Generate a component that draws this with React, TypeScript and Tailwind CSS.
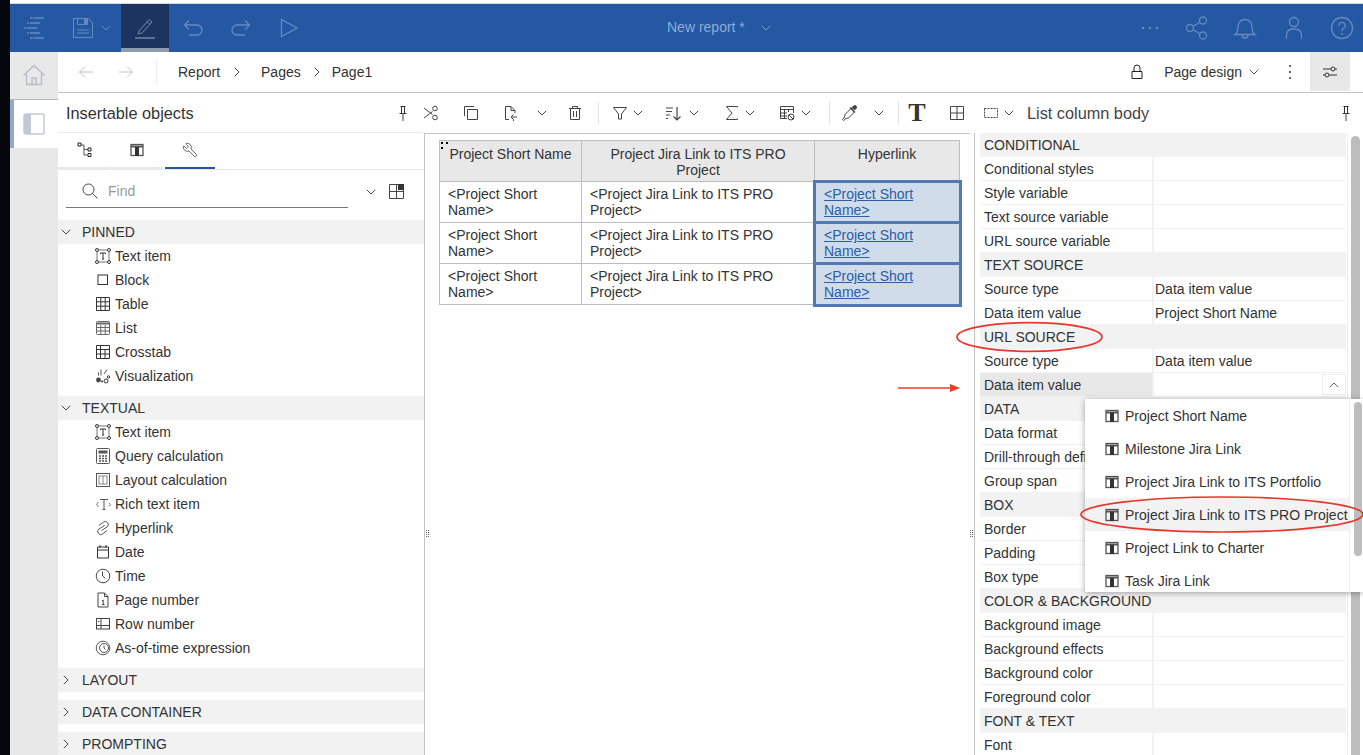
import type { ReactNode } from "react";
import { Wrench } from "lucide-react";

const font = "font-['Liberation_Sans',Arial,sans-serif]";

function Svg({ s = 16, className = "", children }: { s?: number; className?: string; children: ReactNode }) {
  return (
    <svg
      width={s}
      height={s}
      viewBox={`0 0 ${s} ${s}`}
      fill="none"
      stroke="currentColor"
      strokeWidth="1"
      className={`shrink-0 ${className}`}
    >
      {children}
    </svg>
  );
}

function Chev({ className = "text-[#777]" }: { className?: string }) {
  return (
    <svg width="10" height="6" viewBox="0 0 10 6" fill="none" stroke="currentColor" className={`shrink-0 ${className}`}>
      <path d="M.8.8 5 5l4.2-4.2" />
    </svg>
  );
}

const Pin = () => (
  <Svg>
    <path d="M5.500 1.500h5M6.500 1.500v7M9.500 1.500v7M4.500 8.500h7" />
    <path d="M8 8.500V16" strokeWidth="1.400" stroke="#777" />
  </Svg>
);

const ColumnIcon = () => (
  <Svg s={14}>
    <rect x="1" y="1.500" width="12" height="11" stroke="#555" strokeWidth="1.300" />
    <path d="M1 3.500h12" stroke="#555" strokeWidth="2" />
    <rect x="5" y="4" width="4" height="9" fill="#333" stroke="none" />
  </Svg>
);

const itemIcons: Record<string, ReactNode> = {
  text: (
    <Svg>
      <rect x="2" y="2" width="12" height="12" stroke="#777" />
      <rect x=".5" y=".5" width="3" height="3" rx="1.500" fill="#fff" />
      <rect x="12.500" y=".5" width="3" height="3" rx="1.500" fill="#fff" />
      <rect x=".5" y="12.500" width="3" height="3" rx="1.500" fill="#fff" />
      <rect x="12.500" y="12.500" width="3" height="3" rx="1.500" fill="#fff" />
      <path d="M5.500 6V5h5v1M8 5v6M7 11h2" />
    </Svg>
  ),
  block: (
    <Svg>
      <rect x="3" y="3" width="9.500" height="9.500" />
    </Svg>
  ),
  table: (
    <Svg>
      <path d="M1.500 1.500h13v13h-13zM5.800 1.500v13M10.200 1.500v13M1.500 5.800h13M1.500 10.200h13" stroke="#333" />
    </Svg>
  ),
  list: (
    <Svg>
      <rect x="1.500" y="1.500" width="13" height="13" rx="1" stroke="#666" />
      <path d="M1.500 3.500h13" stroke="#666" strokeWidth="2" />
      <path d="M1.500 7.500h13M1.500 11h13M5.800 5v9.500M10.200 5v9.500" stroke="#666" />
    </Svg>
  ),
  crosstab: (
    <Svg>
      <path d="M1.500 1.500h13v13h-13zM5.500 1.500v13M10 5.500v9M1.500 5.500h13M1.500 10h13" stroke="#333" />
    </Svg>
  ),
  viz: (
    <Svg>
      <path d="M3.500 4.500v3M6 1.500v6M12 1.500 9 6" stroke="#555" />
      <circle cx="3.500" cy="12" r="2.400" fill="#444" stroke="none" />
      <circle cx="11" cy="13" r="2" />
      <circle cx="13.500" cy="9" r="1.200" />
      <circle cx="7" cy="13.500" r="1" fill="#444" stroke="none" />
    </Svg>
  ),
  query: (
    <Svg>
      <rect x="1.500" y=".5" width="13" height="15" rx="1" stroke="#555" />
      <rect x="3.500" y="2.500" width="9" height="3" fill="#555" stroke="none" />
      <path d="M4 8h2M7 8h2M10 8h2M4 10.500h2M7 10.500h2M10 10.500h2M4 13h2M7 13h2M10 13h2" stroke="#555" strokeWidth="1.400" />
    </Svg>
  ),
  layoutCalc: (
    <Svg>
      <rect x="1.500" y="1.500" width="13" height="13" stroke="#555" />
      <rect x="4" y="4" width="8" height="8" stroke="#888" />
      <path d="M8 4v8" stroke="#888" />
    </Svg>
  ),
  rich: (
    <Svg>
      <path d="M5 3.500h8M9 3.500v10M7.500 13.500h3" stroke="#555" />
      <path d="M3.500 6 1.500 8.500l2 2.500M14 7l1.500 1.500-1.500 2" stroke="#777" />
    </Svg>
  ),
  link: (
    <Svg>
      <path d="M9.500 5.500 4 9a3 3 0 0 0 3.500 5L12 10.500" stroke="#555" />
      <path d="M6.500 10.500 12 7a3 3 0 0 0-3.500-5L4 5.500" stroke="#555" />
    </Svg>
  ),
  date: (
    <Svg>
      <path d="M2.500 3h11v11h-11zM2.500 6h11M5 1v3M11 1v3" stroke="#333" />
    </Svg>
  ),
  time: (
    <Svg>
      <circle cx="8" cy="8" r="6.800" stroke="#444" />
      <path d="M7.500 3.500V8l3 2.500" stroke="#444" />
    </Svg>
  ),
  page: (
    <Svg>
      <path d="M3 1h6.500L13 4.500V15H3zM9.500 1v3.500H13" stroke="#444" />
      <path d="M7 9l1.200-1v4.500M7 12.500h2.500" stroke="#444" />
    </Svg>
  ),
  row: (
    <Svg>
      <rect x="1.500" y="2.500" width="13" height="10.500" stroke="#444" />
      <path d="M1.500 9.500h13M6 2.500v10.500" stroke="#444" />
      <path d="M3 5.500h1.500" stroke="#444" />
    </Svg>
  ),
  asof: (
    <Svg>
      <circle cx="8" cy="8" r="6.800" stroke="#555" />
      <circle cx="9" cy="8" r="4.500" stroke="#555" />
      <path d="M9 5.500V8l1.500 1.500" stroke="#555" />
    </Svg>
  ),
};

function Item({ icon, label }: { icon: string; label: string }) {
  return (
    <div className="flex h-[24px] items-center pl-[37px]">
      <span className="flex w-[20px] justify-start">{itemIcons[icon]}</span>
      <span>{label}</span>
    </div>
  );
}

function Section({ label, open = false }: { label: string; open?: boolean }) {
  return (
    <div className="flex h-[24px] items-center bg-[#f2f2f2] pl-[3px]">
      <span className="flex w-[21px] justify-start">
        {open ? (
          <Chev className="text-[#444]" />
        ) : (
          <svg width="6" height="10" viewBox="0 0 6 10" fill="none" stroke="#444" className="ml-[2px]">
            <path d="M.8.800 5 5 .8 9.200" />
          </svg>
        )}
      </span>
      <span>{label}</span>
    </div>
  );
}

const propRows: { h?: string; l?: string; v?: string; hl?: boolean }[] = [
  { h: "CONDITIONAL" },
  { l: "Conditional styles" },
  { l: "Style variable" },
  { l: "Text source variable" },
  { l: "URL source variable" },
  { h: "TEXT SOURCE" },
  { l: "Source type", v: "Data item value" },
  { l: "Data item value", v: "Project Short Name" },
  { h: "URL SOURCE" },
  { l: "Source type", v: "Data item value" },
  { l: "Data item value", hl: true },
  { h: "DATA" },
  { l: "Data format" },
  { l: "Drill-through definitions" },
  { l: "Group span" },
  { h: "BOX" },
  { l: "Border" },
  { l: "Padding" },
  { l: "Box type" },
  { h: "COLOR & BACKGROUND" },
  { l: "Background image" },
  { l: "Background effects" },
  { l: "Background color" },
  { l: "Foreground color" },
  { h: "FONT & TEXT" },
  { l: "Font" },
];

const menuItems = [
  "Project Short Name",
  "Milestone Jira Link",
  "Project Jira Link to ITS Portfolio",
  "Project Jira Link to ITS PRO Project",
  "Project Link to Charter",
  "Task Jira Link",
];

function BodyRow() {
  return (
    <>
      <div className="h-[41px] border-r border-b border-[#bdbdbd] pt-[4px] pl-[8px]">&lt;Project Short Name&gt;</div>
      <div className="h-[41px] border-r border-b border-[#bdbdbd] pt-[4px] pl-[8px]">&lt;Project Jira Link to ITS PRO Project&gt;</div>
      <div className="relative z-10 h-[41px] bg-[#d1dcea] pt-[4px] pl-[9px] text-[#2a5ea8] underline outline-[3px] -outline-offset-1 outline-[#5279b5]">
        &lt;Project Short Name&gt;
      </div>
    </>
  );
}

export default function App() {
  return (
    <div className={`relative flex h-[755px] w-[1363px] overflow-hidden bg-white text-[14px] leading-[16px] text-[#333] ${font}`}>
      <div className="w-[10px] shrink-0 bg-[#05070c]" />
      <div className="flex min-w-0 flex-1 flex-col">
        <div className="h-[4px] shrink-0 border-b border-[#d5d8dd] bg-white" />

        {/* top bar */}
        <header className="flex h-[48px] shrink-0 items-center bg-[#2558a3] text-[#6689c0]">
          <div className="flex h-full w-[48px] items-center justify-center">
            <Svg s={24}>
              <g strokeWidth="1.500">
                <path d="M8 2h3M12 2h10M5 7h2M8 7h10M2 12h2M5 12h10M5 17h2M8 17h10M8 22h3M12 22h10" />
              </g>
            </Svg>
          </div>
          <div className="flex h-full w-[63px] items-center pl-[14px]">
            <Svg s={22}>
              <path d="M1.500 1.500h15l4 4v15h-19z" />
              <path d="M5.500 1.500v6h10v-6" />
              <rect x="12" y="2" width="3" height="5" fill="currentColor" stroke="none" />
              <path d="M5 13h12M5 16h12" />
            </Svg>
            <Chev className="ml-[7px] text-[#6689c0]" />
          </div>
          <div className="flex h-full w-[48px] flex-col items-center border-b-4 border-[#8f9aad] bg-[#1d3461] pt-[11px] text-[#6e86ad]">
            <Svg s={24}>
              <path d="M6 16 16 4.500l3 2.500L9 18l-4 1zM14 7l3 2.500" />
              <path d="M2 23h20" strokeWidth="1.500" />
            </Svg>
          </div>
          <div className="flex w-[48px] justify-center">
            <Svg s={22}>
              <path d="M2.500 8H15a5 5 0 0 1 0 10H7M7 3.500 2.500 8 7 12.500" strokeWidth="1.300" />
            </Svg>
          </div>
          <div className="flex w-[48px] justify-center">
            <Svg s={22}>
              <path d="M19.500 8H7a5 5 0 0 0 0 10h8M15 3.500 19.500 8 15 12.500" strokeWidth="1.300" />
            </Svg>
          </div>
          <div className="flex w-[50px] justify-center">
            <Svg s={20}>
              <path d="M1.500 1.500 17 10 1.500 18.500z" strokeWidth="1.300" />
            </Svg>
          </div>
          <span className="mb-[2px] ml-[352px] text-[#8fabd6]">New report *</span>
          <Chev className="ml-[16px] text-[#7f9dcc]" />
          <div className="ml-auto flex items-center pr-[9px]">
            <Svg s={24}>
              <circle cx="5" cy="12" r="1.200" fill="currentColor" stroke="none" />
              <circle cx="12" cy="12" r="1.200" fill="currentColor" stroke="none" />
              <circle cx="19" cy="12" r="1.200" fill="currentColor" stroke="none" />
            </Svg>
            <Svg s={24} className="ml-[23px]">
              <g strokeWidth="1.300">
                <circle cx="5" cy="12" r="3.500" />
                <circle cx="18" cy="4.500" r="3.500" />
                <circle cx="18" cy="19.500" r="3.500" />
                <path d="M8 10.300 15 6.300M8 13.700l7 4" />
              </g>
            </Svg>
            <Svg s={24} className="ml-[24px]">
              <g strokeWidth="1.300">
                <path d="M2 18.500c3-2 3-5 3-8a7 7 0 0 1 14 0c0 3 0 6 3 8zM9 19a3 3 0 0 0 6 0" />
              </g>
            </Svg>
            <Svg s={24} className="ml-[25px]">
              <g strokeWidth="1.300">
                <circle cx="12" cy="6" r="4.500" />
                <path d="M4.500 23v-4a6 6 0 0 1 6-6h3a6 6 0 0 1 6 6v4" />
              </g>
            </Svg>
            <Svg s={24} className="ml-[24px]">
              <g strokeWidth="1.300">
                <circle cx="12" cy="12" r="10.500" />
                <path d="M8.800 9.500a3.200 3.200 0 1 1 5 2.700c-1.200.8-1.800 1.300-1.800 3" />
              </g>
              <circle cx="12" cy="18" r="1" fill="currentColor" stroke="none" />
            </Svg>
          </div>
        </header>

        <div className="flex min-h-0 flex-1">
          {/* rail */}
          <nav className="w-[48px] shrink-0 bg-[#e8e8e8]">
            <div className="flex h-[48px] items-start justify-center border-b border-[#b5b9c2] pt-[11px] text-[#b6bcc8]">
              <Svg s={24}>
                <g strokeWidth="1.400">
                  <path d="M1.500 12.500 12 2.500l10.500 10M4.500 10.500V21a.5.500 0 0 0 .5.500h14a.5.500 0 0 0 .5-.500V10.500" />
                  <path d="M10 21.500V15h4v6.500" />
                </g>
              </Svg>
            </div>
            <div className="flex h-[48px] items-center justify-center border-l-4 border-[#8fa9d3] bg-white pr-[4px] text-[#c3c9d4]">
              <Svg s={22}>
                <rect x="1" y="1" width="20" height="20" rx="2" fill="#fff" stroke="currentColor" strokeWidth="1.500" />
                <rect x="1" y="1" width="7" height="20" fill="currentColor" stroke="none" />
              </Svg>
            </div>
          </nav>

          <div className="flex min-w-0 flex-1 flex-col">
            {/* breadcrumb row */}
            <div className="flex h-[41px] shrink-0 items-center border-b border-[#c4c4c4] pb-[1px]">
              <div className="flex w-[99px] items-center justify-between border-r border-[#ececec] py-[5px] pl-[20px] pr-[22px] text-[#c0c0c0]">
                <Svg>
                  <path d="M15 8H1.500M7 2.500 1.500 8 7 13.500" />
                </Svg>
                <Svg>
                  <path d="M1 8h13.500M9 2.500 14.500 8 9 13.500" />
                </Svg>
              </div>
              <span className="ml-[21px]">Report</span>
              <svg width="6" height="10" viewBox="0 0 6 10" fill="none" stroke="#444" className="ml-[14px]">
                <path d="M.8.800 5 5 .8 9.200" />
              </svg>
              <span className="ml-[21px]">Pages</span>
              <svg width="6" height="10" viewBox="0 0 6 10" fill="none" stroke="#444" className="ml-[13px]">
                <path d="M.8.800 5 5 .8 9.200" />
              </svg>
              <span className="ml-[12px]">Page1</span>
              <div className="ml-auto flex h-full items-center">
                <Svg>
                  <path d="M3 7.500h10v7H3zM5 7.500V4a3 3 0 0 1 6 0v3.500" stroke="#222" />
                </Svg>
                <span className="ml-[19px]">Page design</span>
                <Chev className="ml-[7px] text-[#555]" />
                <div className="ml-[30px] flex w-[2px] flex-col gap-[4px]">
                  <i className="h-[2px] w-[2px] rounded-full bg-[#333]" />
                  <i className="h-[2px] w-[2px] rounded-full bg-[#333]" />
                  <i className="h-[2px] w-[2px] rounded-full bg-[#333]" />
                </div>
                <div className="ml-[19px] mr-[13px] flex h-full w-[40px] items-center justify-center bg-[#e8e8e8]">
                  <Svg>
                    <path d="M1 5h8M13 5h2M1 11h2M7 11h8" stroke="#333" />
                    <circle cx="11" cy="5" r="2" stroke="#333" />
                    <circle cx="5" cy="11" r="2" stroke="#333" />
                  </Svg>
                </div>
              </div>
            </div>

            {/* title row with toolbar */}
            <div className="flex h-[40px] shrink-0 items-center">
              <div className="flex h-full w-[365px] items-center justify-between border-b border-[#e8e8e8] pl-[8px] pr-[12px]">
                <span className="text-[16.300px]">Insertable objects</span>
                <Pin />
              </div>
              <div className="flex h-full items-center text-[#444]">
                <Svg>
                  <path d="M1 3 9.500 9.500M1 13 9.500 6.500M9.500 9.500" />
                  <circle cx="12" cy="3.500" r="2.300" />
                  <circle cx="12" cy="12.500" r="2.300" />
                </Svg>
                <Svg className="ml-[24px]">
                  <path d="M1.500 11V1.500H11M4.500 4.500h10v10h-10z" />
                </Svg>
                <Svg className="ml-[24px]">
                  <path d="M6 14.500H2.500v-13H8l4 4V8M8 1.500v4h4M14 12H8M10.500 9.500 8 12l2.500 2.500V16" />
                </Svg>
                <Chev className="ml-[18px]" />
                <Svg className="ml-[20px]">
                  <path d="M2 3.500h12M5.500 3.500V1.500h5v2M3.500 3.500v11h9v-11M6.500 6v6M9.500 6v6" />
                </Svg>
                <i className="ml-[15px] h-[22px] w-px bg-[#e4e4e4]" />
                <Svg className="ml-[13px]">
                  <path d="M1.500 2.500h13L9.500 9v5h-3V9z" />
                </Svg>
                <Chev className="ml-[5px]" />
                <Svg className="ml-[22px]">
                  <path d="M1 3h7M1 6.500h6M1 10h4M1 13.500h2" />
                  <path d="M12 2v13M8.500 11.500 12 15l3.500-3.500" strokeWidth="1.200" />
                </Svg>
                <Chev className="ml-[8px]" />
                <Svg className="ml-[25px]">
                  <path d="M13.500 2.500v-1h-11L8 8l-5.500 6.500h11v-1" />
                </Svg>
                <Chev className="ml-[5px]" />
                <Svg className="ml-[24px]">
                  <path d="M1.500 1.500h13V8M1.500 1.500v12H8M1.500 4.500h13M1.500 8H8M1.500 11H8M5.500 4.500v9M9.500 4.500V7" />
                  <circle cx="12" cy="12" r="3" fill="#fff" />
                  <path d="M10 10l4 4" />
                </Svg>
                <Chev className="ml-[6px]" />
                <i className="ml-[18px] h-[22px] w-px bg-[#e4e4e4]" />
                <Svg className="ml-[11px]">
                  <path d="M10 3.500 4 9.500l-.5 2.500-2 2.500 1 1 2.500-2 2.500-.5 6-6" />
                  <path d="M9 2.500 14 7.500" strokeWidth="1.500" />
                  <path d="M11 2.500 12.500 1a1.400 1.400 0 0 1 2.500 2.500L13.500 5z" fill="currentColor" />
                </Svg>
                <Chev className="ml-[17px]" />
                <i className="ml-[14px] h-[22px] w-px bg-[#e4e4e4]" />
                <span className="ml-[9px] w-[18px] text-center font-['Liberation_Serif',serif] text-[26px] font-bold leading-[24px] text-[#333]">T</span>
                <div className="ml-[23px]">
                  <Svg>
                    <path d="M1.500 1.500h13v13h-13zM8 1.500v13M1.500 8h13" />
                  </Svg>
                </div>
                <Svg className="ml-[18px]">
                  <rect x="1.500" y="3.500" width="13" height="9" strokeDasharray="2 1" />
                </Svg>
                <Chev className="ml-[5px]" />
                <span className="ml-[13px] text-[16.300px]">List column body</span>
              </div>
              <div className="ml-auto mr-[9px]">
                <Pin />
              </div>
            </div>

            <div className="flex min-h-0 flex-1">
              {/* insertable objects */}
              <aside className="w-[367px] shrink-0 border-r border-[#c4c4c4]">
                <div className="flex h-[37px] items-end border-b border-[#e8e8e8]">
                  <div className="flex h-full w-[52px] items-center justify-center border-b-2 border-[#e8e8e8] pl-[1px]">
                    <Svg s={16}>
                      <path d="M1 1h3v3H1zM11 6h3v3h-3zM11 11.500h3v3h-3z" stroke="#222" />
                      <path d="M4 3h3v10h4M7 7.500h4" stroke="#555" />
                    </Svg>
                  </div>
                  <div className="ml-[1px] flex h-full w-[52px] items-center justify-center border-b-2 border-[#e8e8e8]">
                    <ColumnIcon />
                  </div>
                  <div className="ml-[2px] flex h-full w-[50px] items-center justify-center border-b-2 border-[#2558a3]">
                    <Wrench size={16} strokeWidth={1.100} color="#333" className="-scale-x-100" />
                  </div>
                </div>
                <div className="flex h-[50px] items-start pl-[8px] pr-[16px] pt-[1px]">
                  <div className="flex h-[37px] w-[282px] items-center border-b border-[#777] pl-[16px] pt-[4px] text-[#9a9a9a]">
                    <Svg className="text-[#444]">
                      <circle cx="6.500" cy="6.500" r="5.500" />
                      <path d="m10.500 10.500 5 5" />
                    </Svg>
                    <span className="ml-[10px]">Find</span>
                  </div>
                  <Chev className="ml-[18px] mt-[18px] text-[#444]" />
                  <div className="ml-[13px] mt-[13px]">
                    <svg width="15" height="15" viewBox="0 0 15 15" fill="none" stroke="#444">
                      <path d="M.5.5h14v14H.5zM7.500.5v14M.5 7.500h14" />
                      <rect x="9" y="0" width="6" height="6" fill="#333" stroke="none" />
                    </svg>
                  </div>
                </div>
                <Section label="PINNED" open />
                <Item icon="text" label="Text item" />
                <Item icon="block" label="Block" />
                <Item icon="table" label="Table" />
                <Item icon="list" label="List" />
                <Item icon="crosstab" label="Crosstab" />
                <Item icon="viz" label="Visualization" />
                <div className="h-[8px]" />
                <Section label="TEXTUAL" open />
                <Item icon="text" label="Text item" />
                <Item icon="query" label="Query calculation" />
                <Item icon="layoutCalc" label="Layout calculation" />
                <Item icon="rich" label="Rich text item" />
                <Item icon="link" label="Hyperlink" />
                <Item icon="date" label="Date" />
                <Item icon="time" label="Time" />
                <Item icon="page" label="Page number" />
                <Item icon="row" label="Row number" />
                <Item icon="asof" label="As-of-time expression" />
                <div className="h-[8px]" />
                <Section label="LAYOUT" />
                <div className="h-[8px]" />
                <Section label="DATA CONTAINER" />
                <div className="h-[8px]" />
                <Section label="PROMPTING" />
              </aside>

              {/* canvas */}
              <main className="relative w-[549px] shrink-0">
                <div className="mr-[4px] border-t border-[#c4c4c4] pl-[14px] pt-[6px]">
                  <div className="relative grid w-[521px] grid-cols-[142px_233px_145px] border-t border-l border-[#bdbdbd]">
                    <i className="absolute left-[1px] top-[1px] h-[2px] w-[2px] bg-black" />
                    <i className="absolute left-[6px] top-[1px] h-[2px] w-[2px] bg-black" />
                    <i className="absolute left-[1px] top-[6px] h-[2px] w-[2px] bg-black" />
                    <div className="h-[41px] border-r border-b border-[#bdbdbd] bg-[#e8e8e8] pt-[5px] text-center">Project Short Name</div>
                    <div className="h-[41px] border-r border-b border-[#bdbdbd] bg-[#e8e8e8] px-[8px] pt-[5px] text-center">Project Jira Link to ITS PRO Project</div>
                    <div className="h-[41px] border-r border-b border-[#bdbdbd] bg-[#e8e8e8] pt-[5px] text-center">Hyperlink</div>
                    <BodyRow />
                    <BodyRow />
                    <BodyRow />
                  </div>
                </div>
                <div className="absolute left-[1px] top-[397px] grid grid-cols-2 gap-x-[1px] gap-y-[1px]">
                  {[0, 1, 2, 3, 4, 5, 6, 7].map((d) => (
                    <i key={d} className="h-[1px] w-[1px] bg-[#666]" />
                  ))}
                </div>
                <div className="absolute right-[1px] top-[397px] grid grid-cols-2 gap-x-[1px] gap-y-[1px]">
                  {[0, 1, 2, 3, 4, 5, 6, 7].map((d) => (
                    <i key={d} className="h-[1px] w-[1px] bg-[#666]" />
                  ))}
                </div>
              </main>

              {/* properties */}
              <section className="flex min-w-0 flex-1 border-l border-[#c4c4c4] pl-[5px]">
                <div className="w-[366px] shrink-0">
                  {propRows.map((r, i) =>
                    r.h ? (
                      <div key={i} className="flex h-[24px] items-center bg-[#f2f2f2] pl-[4px]">
                        {r.h}
                      </div>
                    ) : (
                      <div key={i} className="flex h-[24px] border-b border-[#f2f2f2]">
                        <div className={`flex w-[174px] items-center whitespace-nowrap border-r-2 border-[#f2f2f2] pl-[4px] ${r.hl ? "bg-[#e8e8e8]" : ""}`}>
                          {r.l}
                        </div>
                        <div className="flex flex-1 items-center pl-[1px]">
                          {r.v}
                          {r.hl && (
                            <span className="ml-auto flex h-[21px] w-[24px] items-center justify-center border border-[#ececec]">
                              <Chev className="rotate-180 text-[#666]" />
                            </span>
                          )}
                        </div>
                      </div>
                    ),
                  )}
                </div>
                <div className="ml-[1px] flex-1 border-l border-[#eeeeee] pl-[3px] pr-[3px] pt-[3px]">
                  <div className="h-full rounded-t-[5px] bg-[#bdbdbd]" />
                </div>
              </section>
            </div>
          </div>
        </div>
      </div>

      {/* open data item menu */}
      <div className="absolute left-[1085px] top-[399px] flex h-[193px] w-[278px] overflow-hidden bg-white shadow-[0_1px_6px_rgba(0,0,0,0.35)]">
        <div className="w-[265px] shrink-0 border-r border-[#eeeeee]">
          {menuItems.map((m) => (
            <div key={m} className={`flex h-[33px] items-center whitespace-nowrap pl-[20px] ${m.includes("PRO") ? "bg-[#f2f2f2]" : ""}`}>
              <ColumnIcon />
              <span className="ml-[6px]">{m}</span>
            </div>
          ))}
        </div>
        <div className="ml-[4px] mt-[3px] h-[154px] w-[8px] rounded-[5px] bg-[#bdbdbd]" />
      </div>

      {/* red annotations */}
      <svg className="pointer-events-none absolute left-0 top-0" width="1363" height="755" fill="none" stroke="#e5372a" strokeWidth="1.700">
        <ellipse cx="1029.500" cy="337" rx="72.500" ry="14.300" />
        <ellipse cx="1222" cy="514.500" rx="141" ry="17.500" />
        <path d="M898 388h54" strokeWidth="1.400" stroke="#f03a2a" />
        <path d="M950 384l10 4-10 4z" fill="#f03a2a" stroke="none" />
      </svg>
    </div>
  );
}
